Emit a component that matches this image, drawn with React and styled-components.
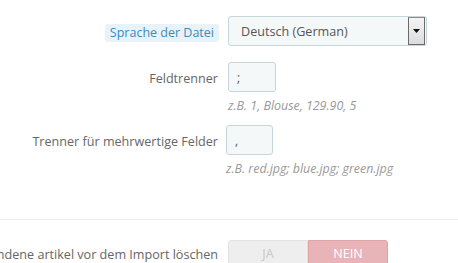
import React from "react";
import styled, { createGlobalStyle } from "styled-components";

const Global = createGlobalStyle`
  html, body { margin: 0; padding: 0; background: #fff; }
  body { font-family: "Open Sans", "DejaVu Sans", sans-serif; font-size: 12.6px; color: #666; }
  * { box-sizing: border-box; }
`;

const Form = styled.div`
  padding-top: 16px;
  width: 458px;
  overflow: hidden;
`;

const Group = styled.div`
  display: grid;
  grid-template-columns: 218px 1fr;
  column-gap: ${(p) => p.$gap ?? 10}px;
  margin-bottom: ${(p) => p.$mb ?? 16}px;
`;

const Label = styled.div`
  height: ${(p) => p.$h ?? 30}px;
  display: flex;
  align-items: center;
  justify-content: flex-end;
  white-space: nowrap;
  font-size: 12.6px;
  color: #666;
  padding-top: ${(p) => p.$pt ?? 2}px;
`;

const TipLabel = styled.span`
  background: #e8f3f9;
  color: #3a8cbd;
  padding: 0 5px;
  line-height: 18px;
  border-radius: 3px;
  margin-right: -1px;
  font-size: 12.5px;
`;

const Field = styled.div`
  display: flex;
  flex-direction: column;
  align-items: flex-start;
`;

const Select = styled.div`
  width: 199px;
  height: 30px;
  border: 1px solid #c7d6db;
  border-radius: 3px;
  background: #f5f8f9;
  display: flex;
  align-items: center;
  justify-content: space-between;
  padding-left: 12px;
  padding-right: 1px;
  font-size: 12.6px;
  color: #555;
`;

const ArrowBtn = styled.div`
  width: 17px;
  height: 28px;
  border: 1px solid #6b6b6b;
  border-top-color: #8a8a8a;
  background: linear-gradient(#f4f4f4, #dcdcdc);
  display: flex;
  align-items: center;
  justify-content: center;
`;

const Input = styled.div`
  width: ${(p) => p.$w}px;
  height: 30px;
  border: 1px solid #c7d6db;
  border-radius: 3px;
  background: #f5f8f9;
  display: flex;
  align-items: center;
  padding-left: 8px;
  font-size: 12px;
  color: #555;
`;

const Hint = styled.div`
  margin-top: 5px;
  line-height: 18px;
  font-size: 12.4px;
  font-style: italic;
  color: #999;
  white-space: nowrap;
`;

const Divider = styled.div`
  border-top: 1px solid #eee;
  margin-top: ${(p) => p.$mt}px;
  margin-bottom: 20px;
`;

const Switch = styled.div`
  display: flex;
  width: 160px;
  height: 28px;
`;

const SwitchOpt = styled.div`
  flex: 1;
  display: flex;
  align-items: center;
  justify-content: center;
  font-size: 12.6px;
  text-transform: uppercase;
  border-radius: ${(p) => (p.$left ? "3px 0 0 3px" : "0 3px 3px 0")};
  background: ${(p) => (p.$active ? "#e9b4b8" : "#eeeeee")};
  color: ${(p) => (p.$active ? "#fff" : "#c8c8c8")};
  border: 1px solid ${(p) => (p.$active ? "#e0a2a7" : "#e3e3e3")};
  padding-bottom: 2px;
`;

export default function App() {
  return (
    <>
      <Global />
      <Form>
        <Group $mb={16}>
          <Label $pt={4}>
            <TipLabel>Sprache der Datei</TipLabel>
          </Label>
          <Field>
            <Select>
              <span>Deutsch (German)</span>
              <ArrowBtn>
                <svg width="7" height="4" viewBox="0 0 7 4">
                  <path d="M0 0 H7 L3.5 4 Z" fill="#111" />
                </svg>
              </ArrowBtn>
            </Select>
          </Field>
        </Group>
        <Group $mb={10}>
          <Label>Feldtrenner</Label>
          <Field>
            <Input $w={48}>;</Input>
            <Hint>z.B. 1, Blouse, 129.90, 5</Hint>
          </Field>
        </Group>
        <Group $gap={8} $mb={0}>
          <Label>Trenner für mehrwertige Felder</Label>
          <Field>
            <Input $w={47}>,</Input>
            <Hint>z.B. red.jpg; blue.jpg; green.jpg</Hint>
          </Field>
        </Group>
        <Divider $mt={41} />
        <Group>
          <Label $pt={0} $h={28}>Vorhandene artikel vor dem Import löschen</Label>
          <Field>
            <Switch>
              <SwitchOpt $left>Ja</SwitchOpt>
              <SwitchOpt $active>Nein</SwitchOpt>
            </Switch>
          </Field>
        </Group>
      </Form>
    </>
  );
}
